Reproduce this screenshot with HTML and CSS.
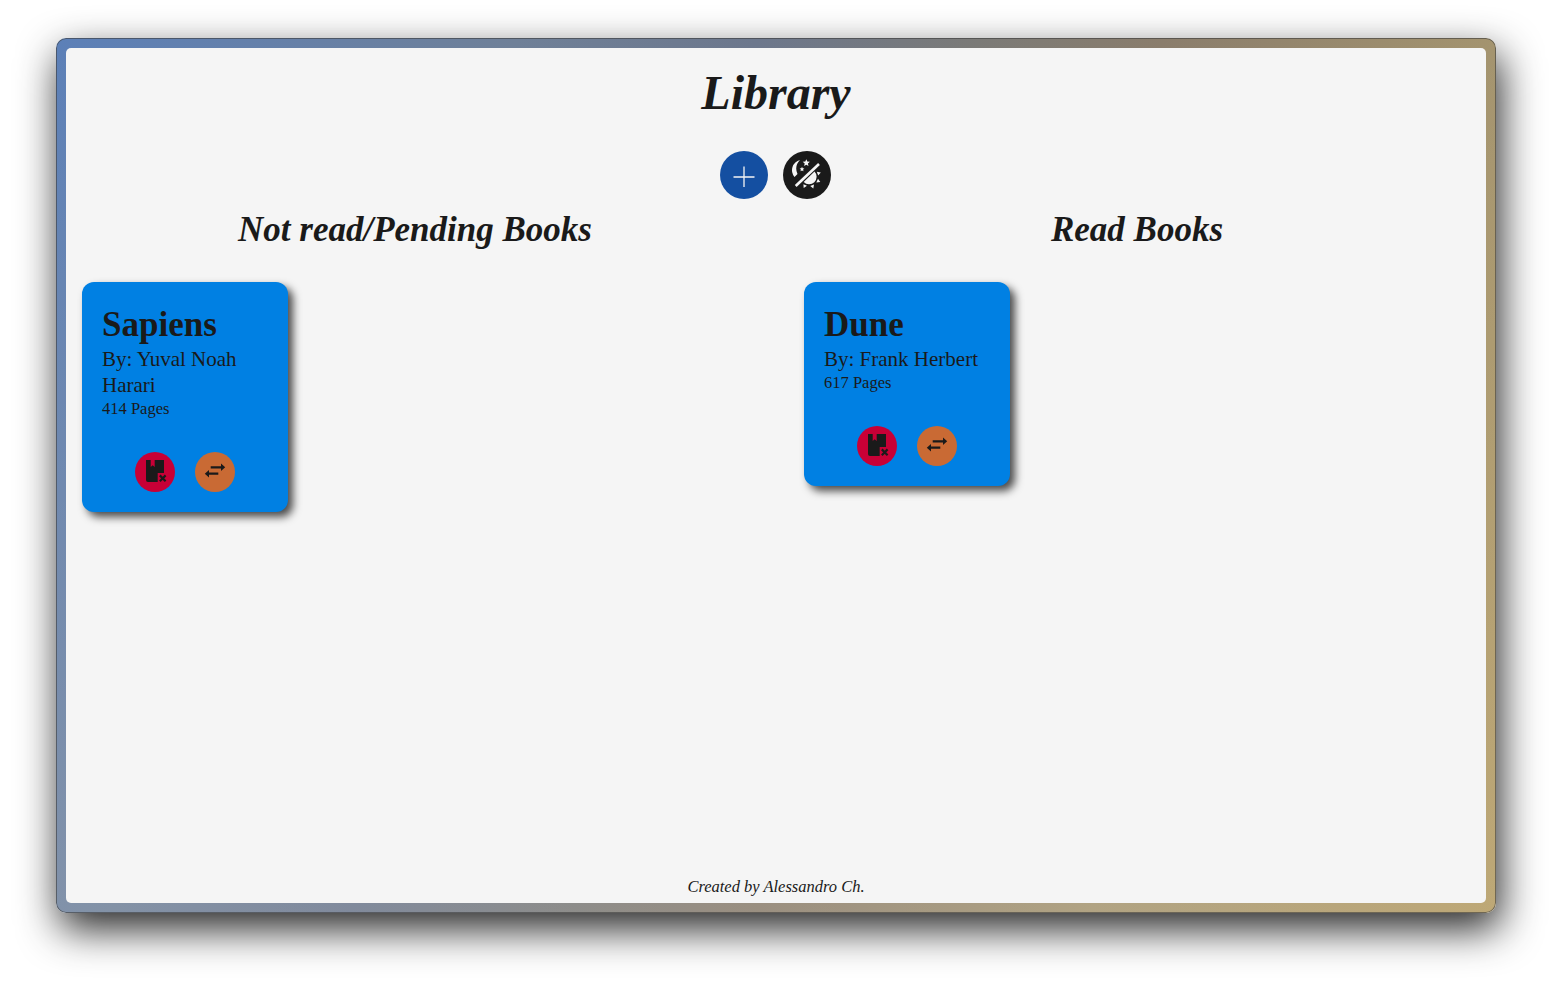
FILE: index.html
```html
<!DOCTYPE html>
<html lang="en">
<head>
    <meta charset="UTF-8">
    <meta name="viewport" content="width=device-width, initial-scale=1.0">
    <title>Library</title>
    <link rel="stylesheet" href="styles.css">
</head>
<body>
    <div class="frame">
        <div class="app">
            <h1 class="title">Library</h1>
            <div class="actions">
                <button class="roundBtn addBtn" aria-label="add book">
                    <svg width="24" height="24" viewBox="0 -2 24 24"><path d="M12 1.500v21M1.500 12h21" stroke="#f5f5f5" stroke-width="1.300" fill="none"/></svg>
                </button>
                <button class="roundBtn themeBtn" aria-label="toggle theme">
                    <svg width="36" height="36" viewBox="0 0 36 36" fill="#f5f5f5">
                        <path d="M11 3A10.500 10.500 0 0 0 5.500 20L8.500 17Q5 9 11 3z"/>
                        <path d="M17.300 2.200l1 2.400 2.600.2-2 1.700.6 2.500-2.200-1.300-2.200 1.300.6-2.500-2-1.700 2.600-.2z"/>
                        <path d="M13 9.800l.7 1.500 1.700.2-1.300 1.100.4 1.700-1.500-.9-1.500.9.4-1.700-1.300-1.100 1.700-.2z"/>
                        <path d="M7.600 30L5.800 28 29.100 6l1.800 2z"/>
                        <path d="M25.500 14.500A7.500 7.500 0 0 1 14.700 25z"/>
                        <path d="M29.200 18.600L27.800 14.800 31.800 15.500zM27.300 25.400L29 21.800 31.300 25.100zM21.200 29L25 27.600 24.300 31.500zM14.400 27.200L18 28.800 14.700 31.100z"/>
                    </svg>
                </button>
            </div>
            <div class="columns">
                <section class="column">
                    <h2 class="columnTitle">Not read/Pending Books</h2>
                    <div class="cards">
                        <article class="card">
                            <h3 class="bookTitle">Sapiens</h3>
                            <p class="author">By: Yuval Noah Harari</p>
                            <p class="pages">414 Pages</p>
                            <div class="cardBtns">
                                <button class="smallBtn removeBtn" aria-label="remove">
                                    <svg width="24" height="24" viewBox="0 0 24 24" fill="#1a1a1a"><path d="M3 0h4.700v7l2-1.700 2 1.700V0H21v13h-6.300v9H5a2 2 0 0 1-2-2z"/><path d="M16.800 15.400l5.800 5.800M22.600 15.400l-5.800 5.800" stroke="#1a1a1a" stroke-width="2.200"/></svg>
                                </button>
                                <button class="smallBtn moveBtn" aria-label="move">
                                    <svg width="24" height="24" viewBox="0 0 24 24" fill="#1a1a1a"><path d="M7.700 6.200H18V3.500l4.200 3.800L18 11.100V8.400H7.700z"/><path d="M15.300 12.600H6V9.900l-4.200 3.800L6 17.500v-2.700h9.300z"/></svg>
                                </button>
                            </div>
                        </article>
                    </div>
                </section>
                <section class="column">
                    <h2 class="columnTitle">Read Books</h2>
                    <div class="cards">
                        <article class="card">
                            <h3 class="bookTitle">Dune</h3>
                            <p class="author">By: Frank Herbert</p>
                            <p class="pages">617 Pages</p>
                            <div class="cardBtns">
                                <button class="smallBtn removeBtn" aria-label="remove">
                                    <svg width="24" height="24" viewBox="0 0 24 24" fill="#1a1a1a"><path d="M3 0h4.700v7l2-1.700 2 1.700V0H21v13h-6.300v9H5a2 2 0 0 1-2-2z"/><path d="M16.800 15.400l5.800 5.800M22.600 15.400l-5.800 5.800" stroke="#1a1a1a" stroke-width="2.200"/></svg>
                                </button>
                                <button class="smallBtn moveBtn" aria-label="move">
                                    <svg width="24" height="24" viewBox="0 0 24 24" fill="#1a1a1a"><path d="M7.700 6.200H18V3.500l4.200 3.800L18 11.100V8.400H7.700z"/><path d="M15.300 12.600H6V9.900l-4.200 3.800L6 17.500v-2.700h9.300z"/></svg>
                                </button>
                            </div>
                        </article>
                    </div>
                </section>
            </div>
            <footer class="credit">Created by Alessandro Ch.</footer>
        </div>
    </div>
</body>
</html>
```
FILE: styles.css
```css
* {
    box-sizing: border-box;
}

html,
body {
    height: 100%;
}

body {
    margin: 0;
    padding: 38px 56px 74px;
    background-color: #fff;
    color: #1a1a1a;
    font-family: "Liberation Serif", serif;
}

.frame {
    height: 100%;
    padding: 10px;
    border-radius: 10px;
    background:
        linear-gradient(to bottom, rgba(255, 255, 255, 0), rgba(255, 255, 255, 0.14)),
        linear-gradient(115deg, #5c80b8 0%, #6f8098 25%, #6c778c 38%, #7b7a77 50%, #8a7d6c 60%, #a4946f 78%, #b39a60 100%);
    box-shadow: inset 0 0 0 1px rgba(60, 60, 60, 0.6), 4px 16px 40px rgba(0, 0, 0, 0.85);
}

.app {
    height: 100%;
    padding: 0 16px;
    display: flex;
    flex-direction: column;
    background-color: #f5f5f5;
    border-radius: 5px;
}

.title {
    margin: 16px 0 0;
    height: 58px;
    text-align: center;
    font-size: 48px;
    line-height: 58px;
    font-style: italic;
    font-weight: 700;
}

.actions {
    margin-top: 29px;
    padding-right: 1px;
    display: flex;
    justify-content: center;
    gap: 15px;
}

.roundBtn {
    width: 48px;
    height: 48px;
    padding: 0;
    border: none;
    border-radius: 50%;
    display: flex;
    align-items: center;
    justify-content: center;
    cursor: pointer;
}

.addBtn {
    background-color: #144fa1;
}

.themeBtn {
    background-color: #1a1a1a;
}

.columns {
    margin-top: 10px;
    display: grid;
    grid-template-columns: 666px 666px;
    gap: 56px;
}

.columnTitle {
    margin: 0;
    height: 40px;
    text-align: center;
    font-size: 35px;
    line-height: 42px;
    font-style: italic;
    font-weight: 700;
}

.cards {
    margin-top: 33px;
    display: flex;
    align-items: flex-start;
    gap: 20px;
}

.card {
    width: 206px;
    padding: 20px;
    background-color: #0080e3;
    border-radius: 12px;
    box-shadow: 5px 5px 8px rgba(0, 0, 0, 0.7);
}

.bookTitle {
    margin: 0;
    height: 44px;
    font-size: 35px;
    line-height: 46px;
    font-weight: 700;
}

.author {
    margin: 0;
    font-size: 21px;
    line-height: 26px;
}

.pages {
    margin: 0;
    font-size: 16.500px;
    line-height: 22px;
}

.cardBtns {
    margin-top: 32px;
    display: flex;
    justify-content: center;
    gap: 20px;
}

.smallBtn {
    width: 40px;
    height: 40px;
    padding: 0;
    border: none;
    border-radius: 50%;
    display: flex;
    align-items: center;
    justify-content: center;
    cursor: pointer;
}

.removeBtn {
    background-color: #c80036;
}

.moveBtn {
    background-color: #c96a34;
}

.credit {
    margin-top: auto;
    height: 32px;
    text-align: center;
    font-size: 16.500px;
    line-height: 32px;
    font-style: italic;
}
```
